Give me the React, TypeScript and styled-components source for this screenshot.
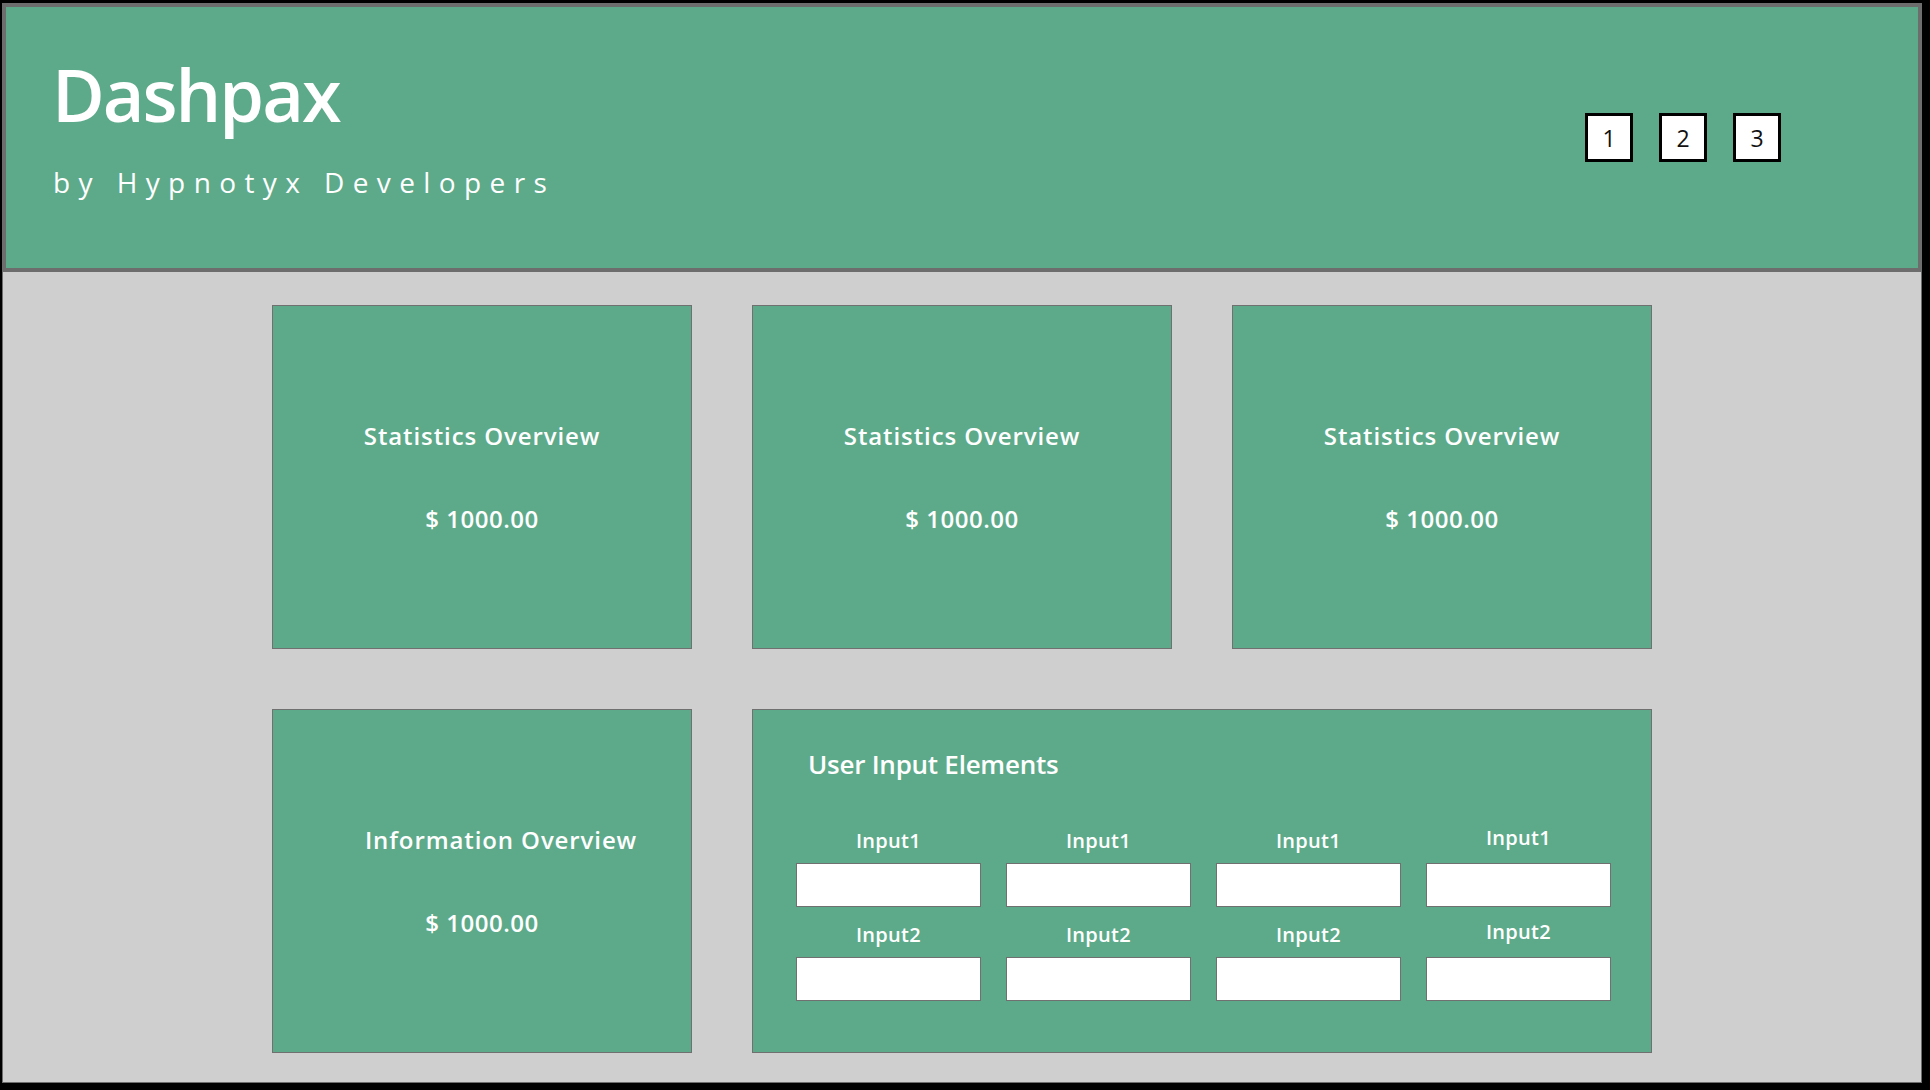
import * as React from "react"
import styled, {createGlobalStyle} from "styled-components"

const GlobalStyle = createGlobalStyle`
    html, body {
        margin: 0;
        padding: 0;
        background: #000000;
    }
    * {
        box-sizing: border-box;
    }
`

const stats = [
    {title: "Statistics Overview", value: "$ 1000.00"},
    {title: "Statistics Overview", value: "$ 1000.00"},
    {title: "Statistics Overview", value: "$ 1000.00"},
]

const inputColumns = [0, 1, 2, 3]

export default function App() {
    return (
        <>
            <GlobalStyle />
            <Frame>
                <Page>
                    <Header>
                        <Brand>
                            <Title>Dashpax</Title>
                            <Subtitle>by Hypnotyx Developers</Subtitle>
                        </Brand>
                        <PageButtons>
                            {["1", "2", "3"].map((item) => (
                                <PageButton key={item}>{item}</PageButton>
                            ))}
                        </PageButtons>
                    </Header>
                    <Grid>
                        {stats.map((item, key) => (
                            <Card key={key}>
                                <CardTitle>{item.title}</CardTitle>
                                <CardValue>{item.value}</CardValue>
                            </Card>
                        ))}
                        <Card>
                            <CardTitle $shift={38}>Information Overview</CardTitle>
                            <CardValue>$ 1000.00</CardValue>
                        </Card>
                        <InputCard>
                            <InputHeading>User Input Elements</InputHeading>
                            <InputGrid>
                                {inputColumns.map((col) => (
                                    <Field key={"a" + col}>
                                        <FieldLabel $raised={col === 3}>Input1</FieldLabel>
                                        <FieldBox />
                                    </Field>
                                ))}
                                {inputColumns.map((col) => (
                                    <Field key={"b" + col}>
                                        <FieldLabel $raised={col === 3}>Input2</FieldLabel>
                                        <FieldBox />
                                    </Field>
                                ))}
                            </InputGrid>
                        </InputCard>
                    </Grid>
                </Page>
            </Frame>
        </>
    )
}

const Frame = styled("div")`
    padding: 3px 8px 7px 2px;
    width: 1930px;
    height: 1090px;
    background: #000000;
`
const Page = styled("div")`
    width: 1920px;
    height: 1080px;
    border: 1px solid #6e6e6e;
    background: #cfcfcf;
    font-family: "Open Sans", "Noto Sans", sans-serif;
    color: #ffffff;
    display: flex;
    flex-direction: column;
`
const Header = styled("header")`
    height: 268px;
    border: 3px solid #6d6d6d;
    border-bottom-width: 4px;
    background: #5daa8a;
    display: flex;
    justify-content: space-between;
    align-items: center;
    padding: 0 137px 0 43px;
`
const Brand = styled("div")`
    display: flex;
    flex-direction: column;
    align-self: flex-start;
    padding-top: 51px;
`
const Title = styled("h1")`
    margin: 0 0 0 3px;
    font-size: 72px;
    line-height: 1;
    font-weight: 600;
    letter-spacing: -2px;
`
const Subtitle = styled("p")`
    margin: 38px 0 0 4px;
    font-size: 28px;
    line-height: 1;
    font-weight: 400;
    letter-spacing: 8.4px;
`
const PageButtons = styled("div")`
    display: flex;
    gap: 26px;
`
const PageButton = styled("button")`
    width: 48px;
    height: 49px;
    border: 3px solid #000000;
    background: #ffffff;
    color: #111111;
    font-family: "Open Sans", "Noto Sans", sans-serif;
    font-size: 23px;
    padding: 0;
    display: flex;
    align-items: center;
    justify-content: center;
`
const Grid = styled("main")`
    display: grid;
    grid-template-columns: repeat(3, 420px);
    grid-auto-rows: 344px;
    column-gap: 60px;
    row-gap: 60px;
    justify-content: center;
    padding-top: 33px;
`
const Card = styled("section")`
    border: 1px solid #707070;
    background: #5daa8a;
    display: flex;
    flex-direction: column;
    align-items: center;
    justify-content: center;
    gap: 59px;
`
const CardTitle = styled("h2")<{$shift?: number}>`
    margin: 0;
    padding-left: ${(p) => p.$shift || 0}px;
    font-size: 24px;
    line-height: 1;
    font-weight: 600;
    letter-spacing: 0.9px;
`
const CardValue = styled("div")`
    font-size: 24px;
    line-height: 1;
    font-weight: 600;
    letter-spacing: 0.5px;
`
const InputCard = styled("section")`
    grid-column: span 2;
    border: 1px solid #707070;
    background: #5daa8a;
    padding: 41px 0 0 43px;
`
const InputHeading = styled("h3")`
    margin: 0 0 54px 12px;
    font-size: 26px;
    line-height: 1;
    font-weight: 600;
    letter-spacing: -0.25px;
`
const InputGrid = styled("div")`
    display: grid;
    grid-template-columns: repeat(4, 185px);
    column-gap: 25px;
    row-gap: 18px;
`
const Field = styled("div")`
    display: flex;
    flex-direction: column;
    align-items: center;
    gap: 12px;
`
const FieldLabel = styled("label")<{$raised?: boolean}>`
    font-size: 20px;
    line-height: 1;
    font-weight: 600;
    letter-spacing: 0.3px;
    transform: translateY(${(p) => (p.$raised ? -3 : 0)}px);
`
const FieldBox = styled("input")`
    width: 185px;
    height: 44px;
    border: 1px solid #707070;
    background: #ffffff;
    padding: 0 6px;
    outline: none;
`
